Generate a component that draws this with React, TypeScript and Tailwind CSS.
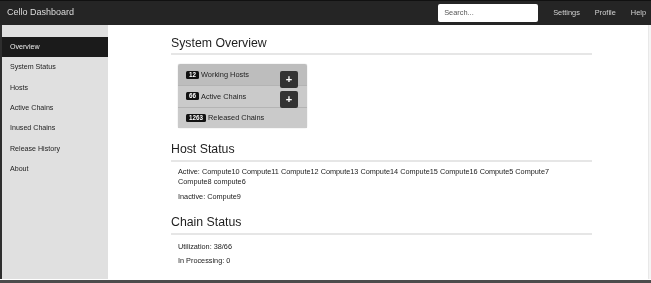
const MENU = ['Overview', 'System Status', 'Hosts', 'Active Chains', 'Inused Chains', 'Release History', 'About']

const STATS = [
  { n: '12', label: 'Working Hosts', add: true, bg: 'bg-[#bdbdbd]', btn: 'mt-[7px]' },
  { n: '66', label: 'Active Chains', add: true, bg: 'bg-[#cacaca]', btn: 'mt-[5px]' },
  { n: '1263', label: 'Released Chains', add: false, bg: 'bg-[#cacaca]', btn: '' },
]

function Heading({ children, className = '' }: { children: React.ReactNode; className?: string }) {
  return (
    <h2 className={`w-[421px] border-b-2 border-[#e6e6e6] pb-[2px] text-[12.3px] leading-[16px] text-[#1e1e1e] ${className}`}>
      {children}
    </h2>
  )
}

export default function App() {
  return (
    <div className="flex h-[283px] w-[651px] flex-col overflow-hidden bg-white font-['Liberation_Sans',Arial,sans-serif] grayscale">
      <nav className="flex h-[25px] shrink-0 items-center border-t border-[#111] bg-[#252525] pl-[7px] pr-[5px]">
        <span className="text-[9px] text-[#dcdcdc]">Cello Dashboard</span>
        <div className="ml-auto flex h-[18px] w-[100px] items-center rounded-[2px] bg-white px-[6px] text-[7.4px] text-[#555]">
          Search...
        </div>
        <div className="ml-[15px] flex gap-[15px] text-[7.4px] text-[#d4d4d4]">
          <span>Settings</span>
          <span>Profile</span>
          <span>Help</span>
        </div>
      </nav>

      <div className="flex h-[254px] border-l-2 border-[#2e2e2e]">
        <aside className="w-[106px] shrink-0 bg-[#e0e0e0] pt-[12px]">
          {MENU.map((m, i) => (
            <div
              key={m}
              className={`flex h-[20.4px] items-center pl-[8px] text-[7.1px] ${i === 0 ? 'bg-[#1b1b1b] text-[#eee]' : 'text-[#222]'}`}
            >
              {m}
            </div>
          ))}
        </aside>

        <main className="flex-1 pl-[63px] pt-[10px] text-[#222]">
          <Heading>System Overview</Heading>

          <div className="ml-[7px] mt-[9px] w-[129px] overflow-visible rounded-[2px] shadow-[0_0_1px_rgba(0,0,0,0.35)]">
            {STATS.map((s, i) => (
              <div
                key={s.label}
                className={`flex h-[21.3px] items-center pl-[8px] pr-[9px] ${s.bg} ${i > 0 ? 'border-t border-[#b4b4b4]' : 'rounded-t-[2px]'}`}
              >
                <span className="rounded-[1.5px] bg-[#121212] px-[3px] text-[6.3px] font-bold leading-[8px] text-white">{s.n}</span>
                <span className="ml-[2px] text-[7.4px] text-[#222]">{s.label}</span>
                {s.add && (
                  <span
                    className={`relative z-10 ml-auto flex h-[17px] w-[18px] items-center justify-center self-start rounded-[2px] bg-[#333] text-[11px] font-bold leading-none text-white ${s.btn}`}
                  >
                    +
                  </span>
                )}
              </div>
            ))}
          </div>

          <Heading className="mt-[13px] pb-[3px]">Host Status</Heading>
          <div className="ml-[7px] mt-[5px] w-[400px] text-[7.3px] leading-[10.5px]">
            <p>Active: Compute10 Compute11 Compute12 Compute13 Compute14 Compute15 Compute16 Compute5 Compute7 Compute8 compute6</p>
            <p className="mt-[4px]">Inactive: Compute9</p>
          </div>

          <Heading className="mt-[12px] pb-[3px]">Chain Status</Heading>
          <div className="ml-[7px] mt-[7px] text-[7.3px] leading-[10.5px]">
            <p>Utilization: 38/66</p>
            <p className="mt-[3px]">In Processing: 0</p>
          </div>
        </main>

        <div className="w-[3px] shrink-0 border-l border-[#e8e8e8] bg-[#f4f4f4]" />
      </div>

      <div className="h-[1px] shrink-0 bg-white" />
      <div className="flex-1 bg-[#4c4c4c]" />
    </div>
  )
}
